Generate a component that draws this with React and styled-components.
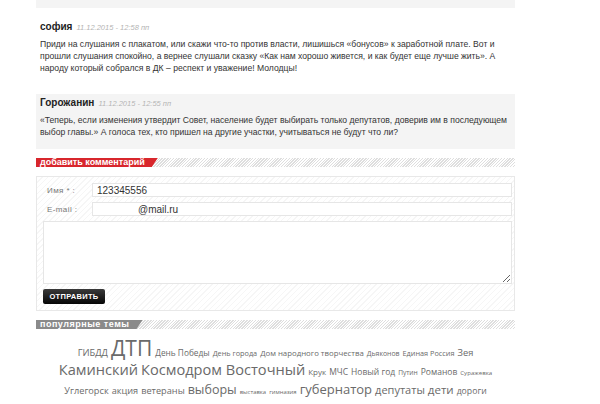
import React from "react";
import styled, { createGlobalStyle } from "styled-components";

const GlobalStyle = createGlobalStyle`
  body {
    margin: 0;
    background: #fff;
    font-family: "Liberation Sans", Arial, sans-serif;
  }
`;

const Column = styled.div`
  width: 479px;
  margin-left: 36px;
`;

const TopBox = styled.div`
  height: 8px;
  background: #f4f4f4;
`;

const Comment = styled.div`
  background: ${(p) => (p.$grey ? "#f4f4f4" : "#fff")};
  padding: ${(p) => (p.$grey ? "3px 4px 11px" : "13px 4px 6px")};
  margin-bottom: ${(p) => (p.$grey ? "9px" : "14px")};
`;

const Author = styled.div`
  font-size: 10px;
  font-weight: bold;
  color: #222;
  line-height: 12px;
  margin-bottom: 4px;
`;

const Date = styled.span`
  font-size: 7.5px;
  font-weight: normal;
  font-style: italic;
  color: #b4b4b4;
  margin-left: 4px;
`;

const Text = styled.p`
  margin: 0;
  font-size: 8.6px;
  line-height: 12px;
  color: #333;
`;

const Stripe = styled.div`
  display: flex;
  height: 9px;
  background: repeating-linear-gradient(
    -45deg,
    #fff 0 1px,
    #dedede 1px 2px
  );
`;

const StripeLabel = styled.div`
  background: ${(p) => p.$color};
  color: #fff;
  font-size: 9px;
  font-weight: bold;
  line-height: 9px;
  letter-spacing: ${(p) => p.$ls || 0}px;
  padding: 0 13px 0 4px;
  clip-path: polygon(0 0, 100% 0, calc(100% - 6px) 100%, 0 100%);
  white-space: nowrap;
`;

const FormBox = styled.div`
  margin-top: 9px;
  border: 1px solid #e8e8e8;
  padding: 6px 2px 6px 6px;
  background: repeating-linear-gradient(
    -45deg,
    #fff 0 3px,
    #f6f6f6 3px 4px
  );
  margin-bottom: 9px;
`;

const Row = styled.div`
  display: flex;
  align-items: center;
  margin-bottom: 5px;
`;

const Label = styled.label`
  width: 45px;
  padding-left: 4px;
  font-size: 8px;
  color: #777;
  letter-spacing: 0.4px;
`;

const Input = styled.input`
  flex: 1;
  height: 14px;
  box-sizing: border-box;
  border: 1px solid #e6e6e6;
  background: #fff;
  font-family: "Liberation Sans", Arial, sans-serif;
  font-size: 10px;
  color: #333;
  padding: 0 4px;
  text-indent: ${(p) => p.$indent || 0}px;
  outline: none;
`;

const TextArea = styled.textarea`
  display: block;
  width: 100%;
  height: 63px;
  box-sizing: border-box;
  border: 1px solid #e6e6e6;
  background: #fff;
  margin: 0 0 5px;
  resize: both;
`;

const Button = styled.button`
  display: block;
  height: 15px;
  width: 62px;
  padding: 0;
  border: 0;
  border-radius: 2px;
  background: linear-gradient(#3a3a3a, #050505);
  color: #fff;
  font-family: "Liberation Sans", Arial, sans-serif;
  font-size: 7.5px;
  font-weight: bold;
  letter-spacing: 0.3px;
`;

const Cloud = styled.div`
  padding-top: 10px;
  font-family: "Open Sans", sans-serif;
  color: #666;
`;

const CloudLine = styled.div`
  display: flex;
  justify-content: center;
  align-items: baseline;
  gap: 3px;
  height: ${(p) => p.$h}px;
  white-space: nowrap;
`;

const Tag = styled.span`
  font-size: ${(p) => p.$size}px;
  line-height: 0.9;
  color: #6a6a6a;
`;

const cloud = [
  {
    h: 24,
    tags: [
      ["ГИБДД", 9.3],
      ["ДТП", 21],
      ["День Победы", 8.3],
      ["День города", 7.3],
      ["Дом народного творчества", 7.8],
      ["Дьяконов", 6.9],
      ["Единая Россия", 7.3],
      ["Зея", 9.3],
    ],
  },
  {
    h: 21,
    tags: [
      ["Каминский", 14.6],
      ["Космодром Восточный", 14.6],
      ["Крук", 8],
      ["МЧС", 8.5],
      ["Новый год", 8.5],
      ["Путин", 6.6],
      ["Романов", 8.5],
      ["Суражевка", 6.1],
    ],
  },
  {
    h: 20,
    tags: [
      ["Углегорск", 9.2],
      ["акция", 9.2],
      ["ветераны", 9.2],
      ["выборы", 12.5],
      ["выставка", 5.9],
      ["гимназия", 5.9],
      ["губернатор", 13],
      ["депутаты", 11],
      ["дети", 11.5],
      ["дороги", 8.7],
    ],
  },
];

export default function App() {
  return (
    <>
      <GlobalStyle />
      <Column>
        <TopBox />
        <Comment>
          <Author>
            софия<Date>11.12.2015 - 12:58 пп</Date>
          </Author>
          <Text>
            Приди на слушания с плакатом, или скажи что-то против власти, лишишься «бонусов» к заработной плате. Вот и
            <br />
            прошли слушания спокойно, а вернее слушали сказку «Как нам хорошо живется, и как будет еще лучше жить». А
            <br />
            народу который собрался в ДК – респект и уважение! Молодцы!
          </Text>
        </Comment>
        <Comment $grey>
          <Author>
            Горожанин<Date>11.12.2015 - 12:55 пп</Date>
          </Author>
          <Text>
            «Теперь, если изменения утвердит Совет, население будет выбирать только депутатов, доверив им в последующем
            <br />
            выбор главы.» А голоса тех, кто пришел на другие участки, учитываться не будут что ли?
          </Text>
        </Comment>

        <Stripe>
          <StripeLabel $color="#d8262c">добавить комментарий</StripeLabel>
        </Stripe>
        <FormBox>
          <Row>
            <Label>Имя * :</Label>
            <Input defaultValue="123345556" />
          </Row>
          <Row>
            <Label>E-mail :</Label>
            <Input $indent={41} defaultValue="@mail.ru" />
          </Row>
          <TextArea />
          <Button>ОТПРАВИТЬ</Button>
        </FormBox>

        <Stripe>
          <StripeLabel $color="#8a8a8a" $ls={0.5}>
            популярные темы
          </StripeLabel>
        </Stripe>
        <Cloud>
          {cloud.map((line, i) => (
            <CloudLine key={i} $h={line.h}>
              {line.tags.map(([t, s]) => (
                <Tag key={t} $size={s}>
                  {t}
                </Tag>
              ))}
            </CloudLine>
          ))}
        </Cloud>
      </Column>
    </>
  );
}
